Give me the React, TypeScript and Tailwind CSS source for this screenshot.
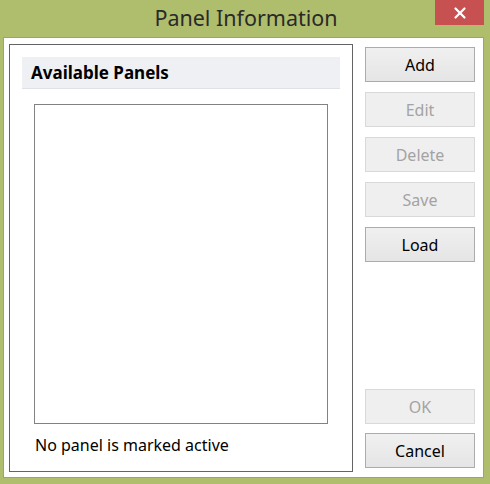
import { X } from "lucide-react";

const buttons = [
  { label: "Add", enabled: true },
  { label: "Edit", enabled: false },
  { label: "Delete", enabled: false },
  { label: "Save", enabled: false },
  { label: "Load", enabled: true },
];

const font = { fontFamily: '"Noto Sans", "Open Sans", sans-serif' };

function DialogButton({ label, enabled }: { label: string; enabled: boolean }) {
  return (
    <button
      className={`h-[35px] w-[110px] text-[16px] leading-none ${
        enabled
          ? "border border-[#acacac] bg-gradient-to-b from-[#f0f0f0] to-[#e5e5e5] text-black"
          : "border border-[#d9d9d9] bg-[#efefef] text-[#a3a3a3]"
      }`}
    >
      {label}
    </button>
  );
}

export default function App() {
  return (
    <div className="flex h-[484px] w-[490px] flex-col bg-[#afbe6d]" style={font}>
      {/* Title bar */}
      <div className="relative flex h-[37px] items-center justify-center">
        <span className="pl-[2px] text-[21.5px] text-[#2a2a2a]">Panel Information</span>
        <button className="absolute right-[6px] top-0 flex h-[25px] w-[49px] items-center justify-center bg-[#c75050]">
          <X size={18} strokeWidth={3} color="white" />
        </button>
      </div>

      {/* Client area */}
      <div className="ml-[3px] flex h-[441px] w-[481px] border border-[#9aa66a] bg-white">
        {/* Group box */}
        <div className="ml-[5px] mt-[6px] flex h-[428px] w-[344px] flex-col border border-[#646464] px-[12px] pt-[12px]">
          <div className="flex h-[32px] items-center border-b border-[#dfe1e6] bg-[#eef0f4] px-[9px]">
            <span className="text-[17px] font-bold text-black">Available Panels</span>
          </div>
          <div className="ml-[12px] mt-[15px] h-[320px] w-[294px] border border-[#828282] bg-white" />
          <div className="ml-[13px] mt-[9px] text-[16px] text-black">No panel is marked active</div>
        </div>

        {/* Buttons */}
        <div className="ml-[12px] mt-[9px] mb-[9px] flex flex-col">
          <div className="flex flex-col gap-[10px]">
            {buttons.map((b) => (
              <DialogButton key={b.label} {...b} />
            ))}
          </div>
          <div className="mt-auto flex flex-col gap-[9px]">
            <DialogButton label="OK" enabled={false} />
            <DialogButton label="Cancel" enabled />
          </div>
        </div>
      </div>
    </div>
  );
}
